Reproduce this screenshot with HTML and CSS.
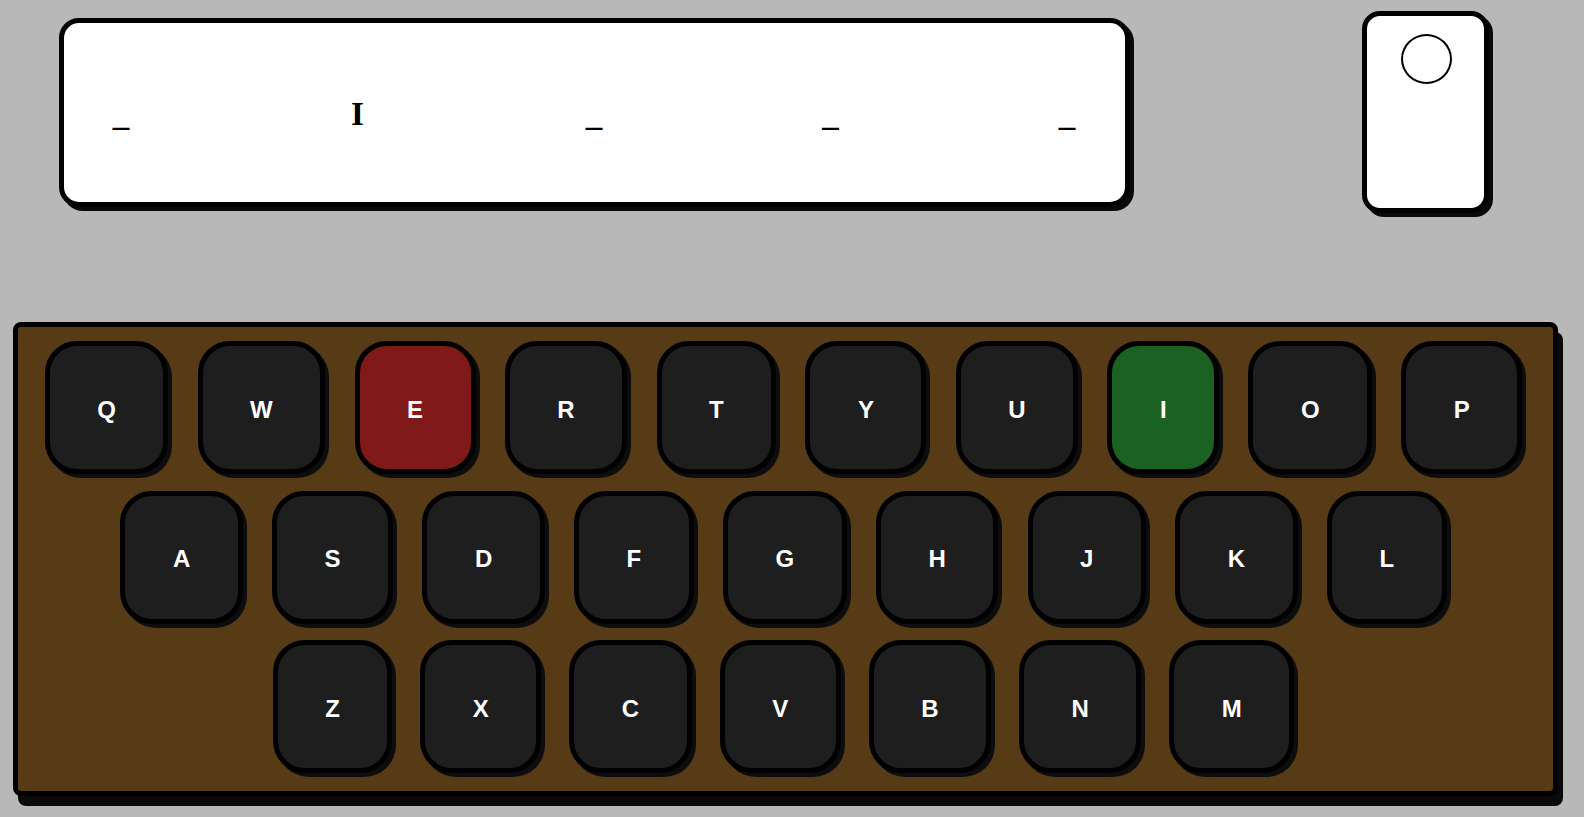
FILE: index.html
```html
<!DOCTYPE html>
<html lang="en">
<head>
<meta charset="utf-8">
<title>Word Game</title>
<link rel="stylesheet" href="styles.css">
</head>
<body>
<div class="app">
  <div class="top">
    <div class="word">
      <span class="slot">_</span>
      <span class="slot">I</span>
      <span class="slot">_</span>
      <span class="slot">_</span>
      <span class="slot">_</span>
    </div>
    <div class="card"><div class="dot"></div></div>
  </div>
  <div class="keyboard">
    <div class="row row-1">
      <div class="key">Q</div>
      <div class="key">W</div>
      <div class="key key-wrong">E</div>
      <div class="key">R</div>
      <div class="key">T</div>
      <div class="key">Y</div>
      <div class="key">U</div>
      <div class="key key-right">I</div>
      <div class="key">O</div>
      <div class="key">P</div>
    </div>
    <div class="row row-2">
      <div class="key">A</div>
      <div class="key">S</div>
      <div class="key">D</div>
      <div class="key">F</div>
      <div class="key">G</div>
      <div class="key">H</div>
      <div class="key">J</div>
      <div class="key">K</div>
      <div class="key">L</div>
    </div>
    <div class="row row-3">
      <div class="key">Z</div>
      <div class="key">X</div>
      <div class="key">C</div>
      <div class="key">V</div>
      <div class="key">B</div>
      <div class="key">N</div>
      <div class="key">M</div>
    </div>
  </div>
</div>
</body>
</html>
```

FILE: styles.css
```css
* {
  box-sizing: border-box;
}

html, body {
  margin: 0;
  padding: 0;
  background: #b8b8b8;
}

body {
  width: 1584px;
  height: 817px;
  overflow: hidden;
  font-family: "Liberation Sans", Arial, sans-serif;
}

.top {
  display: flex;
  align-items: flex-start;
  height: 213px;
  padding-left: 59px;
}

.word {
  margin-top: 18px;
  width: 1071px;
  height: 189px;
  background: #ffffff;
  border: 5px solid #000000;
  border-radius: 20px;
  box-shadow: 4px 4px 0 #0a0a0a;
  display: flex;
  align-items: center;
  justify-content: space-between;
  padding: 3px 38px 0 37px;
}

.slot {
  width: 40px;
  text-align: center;
  font-family: "Liberation Serif", "Times New Roman", serif;
  font-weight: 700;
  font-size: 33px;
  color: #000000;
}

.card {
  margin-top: 11px;
  margin-left: 232px;
  width: 127px;
  height: 202px;
  background: #ffffff;
  border: 5px solid #000000;
  border-radius: 18px;
  box-shadow: 4px 4px 0 #0a0a0a;
  display: flex;
  justify-content: center;
  padding-top: 18px;
  padding-left: 2px;
}

.dot {
  width: 51px;
  height: 50px;
  border: 2px solid #000000;
  border-radius: 50%;
}

.keyboard {
  margin-top: 109px;
  margin-left: 13px;
  width: 1545px;
  height: 474px;
  background: #573a16;
  border: 5px solid #000000;
  border-radius: 8px;
  box-shadow: 5px 10px 0 #0a0a0a;
  padding: 14px 0 18px;
  display: flex;
  flex-direction: column;
  gap: 16.5px;
}

.row {
  display: flex;
  justify-content: center;
  gap: 29.3px;
  padding-right: 4px;
}

.row-3 {
  gap: 28px;
}

.key {
  height: 133px;
  padding: 4px 47.5px 0;
  background: #1e1e1e;
  border: 5px solid #000000;
  border-radius: 32px;
  box-shadow: 4px 4px 0 #0d0d0d;
  display: flex;
  align-items: center;
  justify-content: center;
  color: #ffffff;
  font-size: 24px;
  font-weight: 700;
}

.key-wrong {
  background: #801a1a;
}

.key-right {
  background: #1b6121;
}
```
